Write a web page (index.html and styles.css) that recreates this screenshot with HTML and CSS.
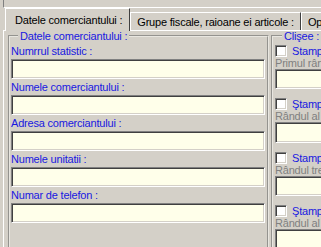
FILE: index.html
```html
<!DOCTYPE html>
<html lang="ro">
<head>
    <meta charset="UTF-8">
    <title>Date comerciant</title>
    <link rel="stylesheet" href="styles.css">
</head>
<body>
    <div class="topbar"></div>
    <div class="tabs">
        <div class="tab active">Datele comerciantului :</div>
        <div class="tab">Grupe fiscale, raioane ei articole :</div>
        <div class="tab">Optiuni</div>
    </div>
    <div class="panel">
        <fieldset class="group left">
            <legend>Datele comerciantului :</legend>
            <label>Numrrul statistic :</label>
            <input type="text">
            <label>Numele comerciantului :</label>
            <input type="text">
            <label>Adresa comerciantului :</label>
            <input type="text">
            <label>Numele unitatii :</label>
            <input type="text">
            <label>Numar de telefon :</label>
            <input type="text">
        </fieldset>
        <fieldset class="group right">
            <legend>Clişee :</legend>
            <div class="check"><span class="box"></span>Stampila 1</div>
            <div class="hint">Primul rând</div>
            <input type="text">
            <div class="check"><span class="box"></span>Ştampila 2</div>
            <div class="hint">Rândul al doilea</div>
            <input type="text">
            <div class="check"><span class="box"></span>Stampila 3</div>
            <div class="hint">Rândul trei</div>
            <input type="text">
            <div class="check"><span class="box"></span>Ştampila 4</div>
            <div class="hint">Rândul al patrulea</div>
            <input type="text">
        </fieldset>
    </div>
</body>
</html>
```
FILE: styles.css
```css
body {
    margin: 0;
    width: 321px;
    height: 247px;
    overflow: hidden;
    background-color: #d4d0c8;
    font-family: 'Liberation Sans', Arial, sans-serif;
    font-size: 11px;
    letter-spacing: -0.2px;
    color: #000;
}
.topbar {
    height: 7px;
    margin-left: 3px;
    border-left: 1px solid #808080;
    border-bottom: 1px solid #fff;
}
.tabs {
    display: flex;
    align-items: flex-end;
    height: 22px;
    padding-left: 5px;
    white-space: nowrap;
}
.tab {
    height: 18px;
    line-height: 18px;
    padding: 0 6px;
    border-top: 1px solid #fff;
    border-left: 1px solid #fff;
    border-right: 1px solid #404040;
    box-sizing: border-box;
}
.tab.active {
    height: 23px;
    line-height: 22px;
    margin-bottom: -1px;
    padding: 0 7px 0 9px;
    background-color: #d4d0c8;
    position: relative;
}
.panel {
    display: flex;
    gap: 2px;
    margin-left: 3px;
    padding: 0 0 0 4px;
    border-top: 1px solid #fff;
    border-left: 1px solid #fff;
    height: 220px;
}
.group {
    margin: 0;
    padding: 2px 1px 0 1px;
    border: 2px groove #e8e6e0;
    display: flex;
    flex-direction: column;
    flex-shrink: 0;
}
.group legend {
    color: #1818e0;
    padding: 0 2px;
    margin-left: 7px;
    line-height: 10px;
}
.left {
    width: 255px;
}
.right {
    width: 120px;
    padding-left: 2px;
}
label {
    display: block;
    color: #1818e0;
    line-height: 16px;
    height: 16px;
}
input[type="text"] {
    height: 20px;
    margin: 0;
    padding: 0 3px;
    background-color: #ffffea;
    border: 1px solid;
    border-color: #808080 #fff #fff #808080;
    box-shadow: inset 1px 1px 0 #404040, inset -1px -1px 0 #d4d0c8;
    box-sizing: border-box;
    font: inherit;
}
.left input[type="text"] {
    width: 254px;
}
.right input[type="text"] {
    width: 110px;
    height: 22px;
}
.check {
    display: flex;
    align-items: center;
    gap: 5px;
    height: 12px;
    margin-top: 9px;
    color: #1818e0;
    white-space: nowrap;
}
.check:first-of-type {
    margin-top: 2px;
}
.box {
    width: 12px;
    height: 12px;
    box-sizing: border-box;
    background-color: #fff;
    border: 1px solid;
    border-color: #808080 #fff #fff #808080;
    box-shadow: inset 1px 1px 0 #404040, inset -1px -1px 0 #d4d0c8;
}
.hint {
    color: #808080;
    line-height: 12px;
    height: 12px;
    white-space: nowrap;
}
```
